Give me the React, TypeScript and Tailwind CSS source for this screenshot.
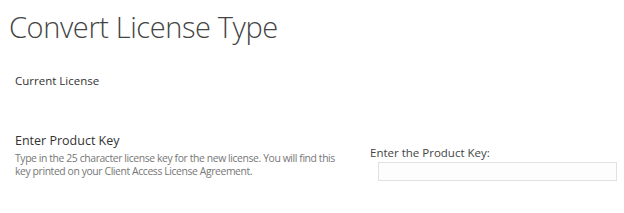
export default function App() {
  return (
    <div className="w-[624px] h-[213px] bg-white overflow-hidden font-['Open_Sans',sans-serif]">
      <h1 className="pl-[9px] pt-[8px] text-[29px] leading-[38px] font-light text-[#444] tracking-[-0.4px]">
        Convert License Type
      </h1>
      <div className="pl-[15px] pt-[27px] text-[11.5px] leading-[16px] text-[#333]">Current License</div>
      <div className="flex pt-[43px]">
        <div className="w-[370px] pl-[15px] pr-[20px]">
          <div className="text-[12.5px] leading-[17px] text-[#333]">Enter Product Key</div>
          <p className="mt-[3px] text-[10.4px] leading-[13px] text-[#777] tracking-[-0.4px]">
            Type in the 25 character license key for the new license. You will find this key printed on your Client
            Access License Agreement.
          </p>
        </div>
        <div className="pt-[13px]">
          <div className="text-[11.5px] leading-[16px] text-[#444]">Enter the Product Key:</div>
          <input
            type="text"
            className="ml-[8px] mt-[1px] block w-[239px] h-[19px] border border-[#e1e1e1] bg-[#fdfdfd] outline-none"
          />
        </div>
      </div>
    </div>
  );
}
